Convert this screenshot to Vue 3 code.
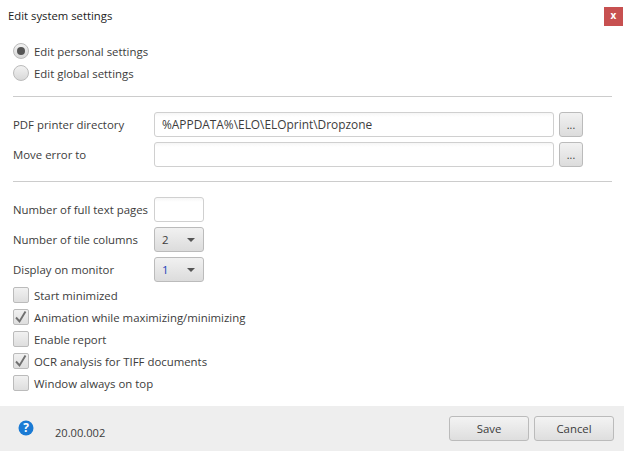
<script setup>
const checks = [
  { label: 'Start minimized', on: false },
  { label: 'Animation while maximizing/minimizing', on: true },
  { label: 'Enable report', on: false },
  { label: 'OCR analysis for TIFF documents', on: true },
  { label: 'Window always on top', on: false }
]
</script>

<template>
  <div class="dialog">
    <header class="titlebar">
      <span class="title">Edit system settings</span>
      <span class="close">x</span>
    </header>
    <main class="body">
      <section class="radios">
        <div class="radio-row"><span class="radio on"><i></i></span><span>Edit personal settings</span></div>
        <div class="radio-row"><span class="radio"></span><span>Edit global settings</span></div>
      </section>
      <hr class="sep first" />
      <section class="paths">
        <div class="path-row">
          <label class="path-label">PDF printer directory</label>
          <div class="input wide">%APPDATA%\ELO\ELOprint\Dropzone</div>
          <div class="dots">...</div>
        </div>
        <div class="path-row">
          <label class="path-label">Move error to</label>
          <div class="input wide"></div>
          <div class="dots">...</div>
        </div>
      </section>
      <hr class="sep second" />
      <section class="numbers">
        <div class="path-row">
          <label class="path-label">Number of full text pages</label>
          <div class="input small"></div>
        </div>
        <div class="path-row">
          <label class="path-label">Number of tile columns</label>
          <div class="select"><span>2</span><b></b></div>
        </div>
        <div class="path-row">
          <label class="path-label">Display on monitor</label>
          <div class="select"><span class="blue">1</span><b></b></div>
        </div>
      </section>
      <section class="checks">
        <div v-for="c in checks" :key="c.label" class="check-row">
          <span class="box">
            <svg v-if="c.on" width="14" height="14" viewBox="0 0 14 14"><path d="M2 7.5 L5.5 11.5 L11.5 1.5" fill="none" stroke="#707070" stroke-width="1.9"/></svg>
          </span>
          <span>{{ c.label }}</span>
        </div>
      </section>
    </main>
    <footer class="footer">
      <div class="version">
        <svg class="help" width="16" height="16" viewBox="0 0 16 16">
          <circle cx="8" cy="8" r="7.5" fill="#1a7ad4"/>
          <text x="8" y="12.4" text-anchor="middle" font-size="12" font-weight="700" font-family="'Open Sans',sans-serif" fill="#fff">?</text>
        </svg>
        <span class="ver">20.00.002</span>
      </div>
      <div class="actions">
        <div class="btn">Save</div>
        <div class="btn">Cancel</div>
      </div>
    </footer>
  </div>
</template>

<style>
html, body { margin: 0; background: #fff; }
</style>

<style scoped>
.dialog {
  width: 624px;
  height: 451px;
  display: flex;
  flex-direction: column;
  background: #fff;
  font-family: "Open Sans", sans-serif;
  font-size: 11.4px;
  color: #3c3c3c;
  overflow: hidden;
}
.titlebar {
  height: 43px;
  flex: none;
  display: flex;
  justify-content: space-between;
  align-items: flex-start;
  padding: 7px 1px 0 8px;
  box-sizing: border-box;
}
.title { color: #222; line-height: 17px; font-size: 11.3px; }
.close {
  width: 19px;
  height: 19px;
  background: #c75050;
  color: #fff;
  font-weight: 700;
  font-size: 10px;
  line-height: 17px;
  text-align: center;
}
.body { flex: 1; padding: 0 12px 0 13px; }
.radios { display: flex; flex-direction: column; gap: 6px; }
.radio-row { display: flex; align-items: center; gap: 5px; height: 16px; }
.radio {
  box-sizing: border-box;
  width: 16px;
  height: 16px;
  border: 1px solid #bbb;
  border-radius: 50%;
  background: linear-gradient(#f2f2f2, #d8d8d8);
  display: flex;
  align-items: center;
  justify-content: center;
  flex: none;
}
.radio i { width: 8px; height: 8px; border-radius: 50%; background: #555; }
.sep { border: 0; border-top: 1px solid #ccc; margin: 0; }
.sep.first { margin: 15px 0 15px; }
.sep.second { margin: 14px 0 15px; }
.path-row { display: flex; align-items: center; height: 25px; margin-bottom: 5px; }
.path-row:last-child { margin-bottom: 0; }
.path-label { width: 141px; flex: none; }
.input {
  box-sizing: border-box;
  height: 25px;
  border: 1px solid #d0d0d0;
  border-radius: 3px;
  background: linear-gradient(#f6f6f6, #fff 4px);
  line-height: 23px;
  padding-left: 7px;
  font-size: 11.9px;
}
.wide { width: 400px; }
.small { width: 50px; }
.dots {
  box-sizing: border-box;
  width: 24px;
  height: 25px;
  margin-left: 5px;
  border: 1px solid #bbb;
  border-radius: 3px;
  background: linear-gradient(#f1f1f1, #dcdcdc);
  text-align: center;
  line-height: 24px;
  font-size: 10.5px;
}
.select {
  box-sizing: border-box;
  width: 50px;
  height: 25px;
  border: 1px solid #bbb;
  border-radius: 3px;
  background: linear-gradient(#f1f1f1, #dcdcdc);
  display: flex;
  align-items: center;
  justify-content: space-between;
  padding: 0 8px 0 7px;
}
.select b {
  width: 0;
  height: 0;
  border-left: 4px solid transparent;
  border-right: 4px solid transparent;
  border-top: 4px solid #555;
}
.blue { color: #1c3fb8; }
.checks { display: flex; flex-direction: column; gap: 6px; margin-top: 5px; }
.check-row { display: flex; align-items: center; gap: 5px; height: 16px; }
.box {
  box-sizing: border-box;
  width: 16px;
  height: 16px;
  border: 1px solid #bbb;
  border-radius: 2px;
  background: linear-gradient(#f1f1f1, #dedede);
  flex: none;
  display: flex;
  align-items: center;
  justify-content: center;
}
.footer {
  height: 45px;
  flex: none;
  background: #eeeeee;
  display: flex;
  justify-content: space-between;
  align-items: center;
  padding: 0 10px 0 18px;
  box-sizing: border-box;
}
.version { display: flex; align-items: center; gap: 21px; }
.ver { padding-top: 7px; font-size: 11.1px; }
.help { margin-top: -2px; }
.actions { display: flex; gap: 5px; }
.btn {
  box-sizing: border-box;
  width: 80px;
  height: 25px;
  border: 1px solid #bbb;
  border-radius: 3px;
  background: linear-gradient(#f3f3f3, #dedede);
  text-align: center;
  line-height: 23px;
}
</style>
